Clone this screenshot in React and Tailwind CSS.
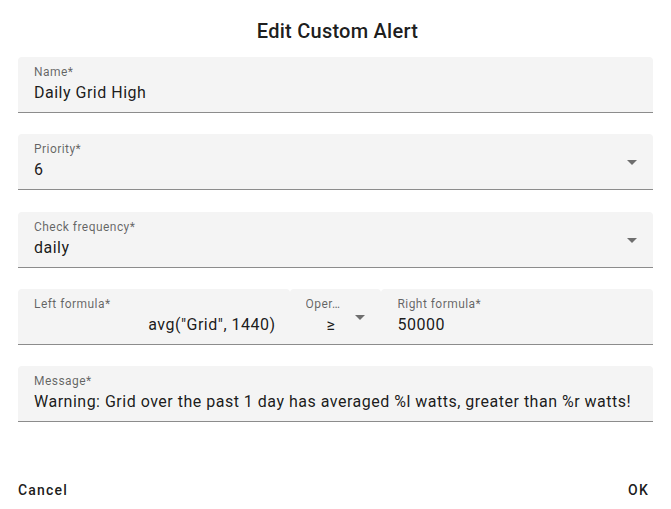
const font = { fontFamily: 'Roboto, "Liberation Sans", sans-serif' };

function Arrow() {
  return (
    <svg viewBox="0 0 24 24" className="absolute right-[9px] top-[16px] h-6 w-6 fill-black/55">
      <path d="M7 10l5 5 5-5z" />
    </svg>
  );
}

function Field({ label, value, select, className = '', align = 'left' }) {
  return (
    <div
      className={`relative h-[56px] bg-[#f4f4f4] border-b border-[#8c8c8c] pt-[8px] pl-4 ${
        select ? 'pr-[32px]' : align === 'right' ? 'pr-[14px]' : 'pr-4'
      } ${className}`}
    >
      <div className="text-[12px] leading-[15px] tracking-[0.45px] text-black/60 whitespace-nowrap overflow-hidden text-ellipsis">
        {label}
      </div>
      <div
        className={`mt-[1px] text-[16px] leading-[23px] tracking-[0.5px] text-black/90 whitespace-nowrap ${
          align === 'right' ? 'text-right' : align === 'center' ? 'text-center pl-[7px]' : ''
        }`}
      >
        {value}
      </div>
      {select && <Arrow />}
    </div>
  );
}

export default function App() {
  return (
    <div className="w-[671px] h-[509px] bg-white flex flex-col" style={font}>
      <h2 className="pt-[15px] pl-[4px] h-[46px] leading-8 text-center text-[20px] font-medium tracking-[0.25px] text-black/90">
        Edit Custom Alert
      </h2>
      <div className="mt-[11px] px-[18px] flex flex-col gap-[21.25px]">
        <Field label="Name*" value="Daily Grid High" className="rounded-t" />
        <Field label="Priority*" value="6" select className="rounded-t" />
        <Field label="Check frequency*" value="daily" select className="rounded-t" />
        <div className="flex">
          <Field label="Left formula*" value={'avg("Grid", 1440)'} align="right" className="w-[272px] rounded-t" />
          <Field label="Oper…" value="≥" select align="center" className="w-[92px] rounded-t" />
          <Field label="Right formula*" value="50000" className="w-[272px] rounded-t" />
        </div>
        <Field
          label="Message*"
          value="Warning: Grid over the past 1 day has averaged %l watts, greater than %r watts!"
          className="rounded-t"
        />
      </div>
      <div className="mt-auto mb-px px-[18px] flex justify-between items-center h-9">
        <button className="text-[14px] font-medium tracking-[1.2px] text-black/90">Cancel</button>
        <button className="text-[14px] font-medium tracking-[1.2px] text-black/90 mr-[4px]">OK</button>
      </div>
    </div>
  );
}
